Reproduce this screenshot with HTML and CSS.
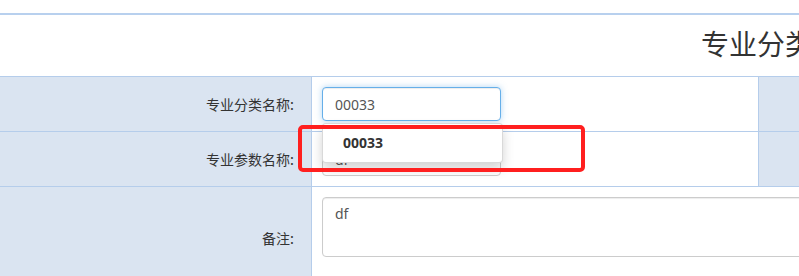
FILE: index.html
```html
<!DOCTYPE html>
<html lang="zh-CN">
<head>
    <meta charset="UTF-8">
    <meta name="viewport" content="width=device-width, initial-scale=1.0">
    <title>专业分类参数</title>
    <link rel="stylesheet" href="styles.css">
</head>
<body>
    <div class="page">
        <div class="form-table">
            <div class="form-title">专业分类参数</div>

            <div class="form-row">
                <div class="form-label">专业分类名称:</div>
                <div class="form-field">
                    <div class="combo">
                        <input type="text" class="form-control is-focus" value="00033">
                        <ul class="typeahead">
                            <li class="active"><a href="#">00033</a></li>
                        </ul>
                    </div>
                </div>
                <div class="form-label side"></div>
            </div>

            <div class="form-row">
                <div class="form-label">专业参数名称:</div>
                <div class="form-field">
                    <input type="text" class="form-control" value="df">
                </div>
                <div class="form-label side"></div>
            </div>

            <div class="form-row tall">
                <div class="form-label">备注:</div>
                <div class="form-field wide">
                    <textarea class="form-control memo">df</textarea>
                </div>
            </div>
        </div>

        <!-- 标注框 -->
        <div class="mark"></div>
    </div>
</body>
</html>
```

FILE: styles.css
```css
body {
    margin: 0;
    padding: 0;
    background: #fff;
    color: #333;
    font-family: "Noto Sans", "Noto Sans CJK SC", sans-serif;
    font-size: 14px;
    overflow: hidden;
}

.page {
    position: relative;
    padding-top: 13px;
    width: 1500px;
}

.form-table {
    border-top: 2px solid #b8d0ee;
}

.form-title {
    height: 61px;
    line-height: 58px;
    padding-left: 701px;
    font-size: 28px;
    color: #333;
    border-bottom: 1px solid #b5cdeb;
}

.form-row {
    display: grid;
    grid-template-columns: 312px 446px 1fr;
    height: 54px;
    border-bottom: 1px solid #b5cdeb;
}

.form-row.tall {
    grid-template-columns: 312px 1fr;
    height: 102px;
    border-bottom: none;
}

.form-label {
    box-sizing: border-box;
    background: #dae4f1;
    border-right: 1px solid #b5cdeb;
    display: flex;
    align-items: center;
    justify-content: flex-end;
    padding-right: 17px;
    font-family: "Noto Sans CJK SC", sans-serif;
    font-size: 14px;
    color: #333;
}

.form-label.side {
    border-right: none;
    border-left: 1px solid #b5cdeb;
}

.form-field {
    display: flex;
    align-items: center;
    padding-left: 10px;
}

.form-field.wide {
    align-items: flex-start;
    padding-top: 10px;
}

.combo {
    position: relative;
}

.form-control {
    box-sizing: border-box;
    width: 179px;
    height: 34px;
    padding: 6px 12px;
    font-family: "Noto Sans", "Noto Sans CJK SC", sans-serif;
    font-size: 14px;
    color: #555;
    background: #fff;
    border: 1px solid #ccc;
    border-radius: 4px;
    box-shadow: inset 0 1px 1px rgba(0, 0, 0, 0.075);
    outline: none;
}

.form-control.is-focus {
    border-color: #66afe9;
    box-shadow: inset 0 1px 1px rgba(0, 0, 0, 0.075), 0 0 6px rgba(102, 175, 233, 0.5);
}

.memo {
    width: 900px;
    height: 60px;
    resize: none;
    line-height: 20px;
}

.typeahead {
    position: absolute;
    top: 100%;
    left: 0;
    margin: 2px 0 0;
    padding: 6px 0;
    min-width: 181px;
    box-sizing: border-box;
    list-style: none;
    background: #fff;
    border: 1px solid rgba(0, 0, 0, 0.15);
    border-radius: 4px;
    box-shadow: 0 6px 12px rgba(0, 0, 0, 0.175);
    z-index: 10;
}

.typeahead li a {
    display: block;
    padding: 3px 20px;
    line-height: 20px;
    font-weight: bold;
    color: #333;
    text-decoration: none;
}

.mark {
    position: absolute;
    left: 298px;
    top: 125px;
    width: 287px;
    height: 47px;
    box-sizing: border-box;
    border: 4px solid #ff1f1f;
    border-radius: 5px;
    z-index: 20;
}
```
